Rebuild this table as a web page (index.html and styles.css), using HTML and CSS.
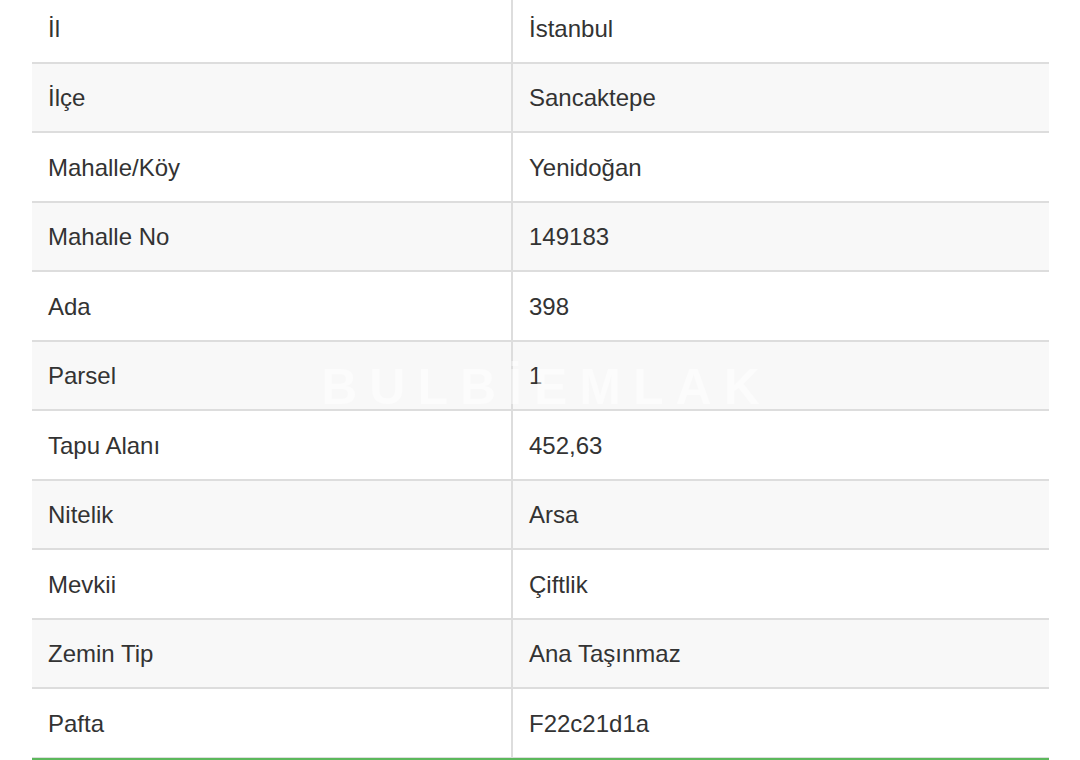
FILE: index.html
```html
<!DOCTYPE html>
<html>
<head>
    <meta charset="UTF-8">
    <meta name="viewport" content="width=device-width, initial-scale=1.0">
    <title>Tapu Bilgileri</title>
    <link rel="stylesheet" href="styles.css">
</head>
<body>
<div class="info-container">
    <table class="info-table">
        <tbody>
        <tr><td class="label">İl</td><td>İstanbul</td></tr>
        <tr><td class="label">İlçe</td><td>Sancaktepe</td></tr>
        <tr><td class="label">Mahalle/Köy</td><td>Yenidoğan</td></tr>
        <tr><td class="label">Mahalle No</td><td>149183</td></tr>
        <tr><td class="label">Ada</td><td>398</td></tr>
        <tr><td class="label">Parsel</td><td>1</td></tr>
        <tr><td class="label">Tapu Alanı</td><td>452,63</td></tr>
        <tr><td class="label">Nitelik</td><td>Arsa</td></tr>
        <tr><td class="label">Mevkii</td><td>Çiftlik</td></tr>
        <tr><td class="label">Zemin Tip</td><td>Ana Taşınmaz</td></tr>
        <tr><td class="label">Pafta</td><td>F22c21d1a</td></tr>
        </tbody>
    </table>
    <div class="watermark">BULBİEMLAK</div>
</div>
</body>
</html>
```

FILE: styles.css
```css
body {
    margin: 0;
    background-color: white;
    font-family: "Liberation Sans", Arial, sans-serif;
}
.info-container {
    position: relative;
    width: 1017px;
    margin: -6px 0 0 32px;
    border-bottom: 3px solid #5cb85c;
}
.info-table {
    width: 100%;
    border-collapse: separate;
    border-spacing: 0;
    table-layout: fixed;
}
.info-table td {
    padding: 21.5px 16px 20.5px;
    line-height: 25.5px;
    font-size: 24px;
    color: #333;
    border-bottom: 2px solid #ddd;
}
.info-table tr:last-child td {
    border-bottom: 1px solid #ddd;
}
.info-table td.label {
    width: 481px;
    box-sizing: border-box;
    border-right: 2px solid #ddd;
}
.info-table tr:nth-child(even) td {
    background-color: #f8f8f8;
}
.watermark {
    position: absolute;
    left: 0;
    right: 0;
    top: 364px;
    padding-left: 12px;
    text-align: center;
    font-size: 50px;
    font-weight: bold;
    letter-spacing: 12px;
    color: rgba(255, 255, 255, 0.5);
    pointer-events: none;
}
```
